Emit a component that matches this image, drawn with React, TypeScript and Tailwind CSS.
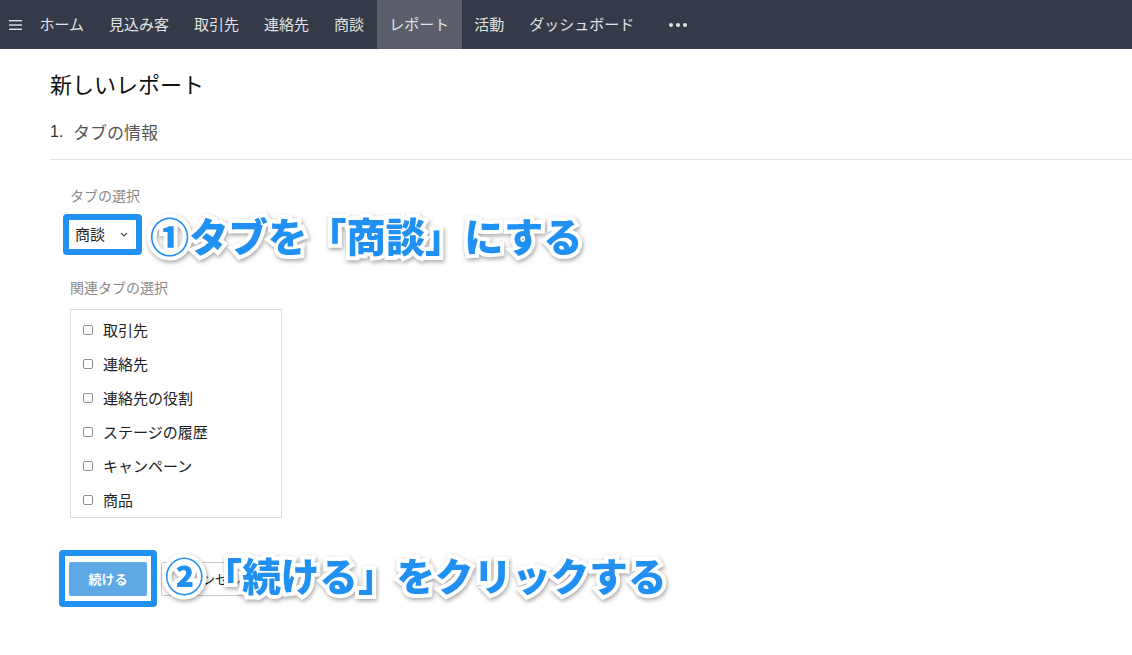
import React from "react";

const navItems = ["ホーム", "見込み客", "取引先", "連絡先", "商談", "レポート", "活動", "ダッシュボード"];
const related = ["取引先", "連絡先", "連絡先の役割", "ステージの履歴", "キャンペーン", "商品"];

const jp = "font-['Noto_Sans_CJK_JP','Noto_Sans',sans-serif]";

function Callout({ children, small }: { children: React.ReactNode; small?: boolean }) {
  return (
    <span
      className={`${jp} whitespace-nowrap ${small ? "text-[38.6px]" : "text-[39.3px]"} font-black leading-none text-[#2190f3] [-webkit-text-stroke:8px_white] [paint-order:stroke_fill] [filter:drop-shadow(1px_2px_2px_rgba(0,0,0,0.35))]`}
    >
      {children}
    </span>
  );
}

export default function App() {
  return (
    <div className={`${jp} min-h-[655px] w-full bg-white`}>
      {/* top nav */}
      <nav className="flex h-[49px] items-stretch bg-[#343a47] text-[15px] text-[#e1e2e5]">
        <div className="flex w-[27px] items-center justify-end pr-[5px]">
          <svg width="13" height="10" viewBox="0 0 13 10">
            <rect x="0" y="0" width="13" height="1.4" fill="#e1e2e5" />
            <rect x="0" y="4.3" width="13" height="1.4" fill="#e1e2e5" />
            <rect x="0" y="8.6" width="13" height="1.4" fill="#e1e2e5" />
          </svg>
        </div>
        {navItems.map((n) => (
          <div
            key={n}
            className={`flex items-center px-[12.5px] ${n === "レポート" ? "bg-[#5a5f6b]" : ""}`}
          >
            {n}
          </div>
        ))}
        <div className="ml-[10px] flex items-center gap-[3px] px-[12px]">
          <span className="h-[4px] w-[4px] rounded-full bg-[#e1e2e5]" />
          <span className="h-[4px] w-[4px] rounded-full bg-[#e1e2e5]" />
          <span className="h-[4px] w-[4px] rounded-full bg-[#e1e2e5]" />
        </div>
      </nav>

      <main className="pl-[50px]">
        <h1 className="mt-[23px] text-[22px] leading-[22px] text-[#111]">新しいレポート</h1>
        <div className="mt-[28px] flex items-center text-[17px] leading-[20px] text-[#555]">
          <span className="w-[23px] font-['Liberation_Sans',sans-serif] text-[16px] text-[#333]">1.</span>
          <span>タブの情報</span>
        </div>
        <div className="mt-[17px] border-t border-[#e4e4e4]" />

        <section className="pl-[20px]">
          <div className="mt-[26px] text-[14px] leading-[18px] text-[#8a8a8a]">タブの選択</div>
          <div className="mt-[10px] -ml-[7px] flex items-center gap-[8px]">
            <div className="flex h-[41px] w-[79px] items-center rounded-[4px] border-[6px] border-[#2190f3] bg-white pl-[6px] pr-[8px]">
              <span className="text-[15px] text-[#222]">商談</span>
              <svg className="ml-auto" width="8" height="5" viewBox="0 0 8 5">
                <path d="M1 1 L4 4 L7 1" stroke="#555" strokeWidth="1.2" fill="none" />
              </svg>
            </div>
            <Callout>①タブを「商談」にする</Callout>
          </div>

          <div className="mt-[23px] text-[14px] leading-[18px] text-[#8a8a8a]">関連タブの選択</div>
          <div className="mt-[13px] w-[212px] border border-[#dcdcdc] pt-[3px]">
            {related.map((r) => (
              <div key={r} className="flex h-[34px] items-center pl-[12px] text-[15px] text-[#222]">
                <span className="h-[10px] w-[10px] rounded-[2px] border border-[#8d8d8d] bg-white" />
                <span className="ml-[10px]">{r}</span>
              </div>
            ))}
          </div>

          <div className="relative mt-[32px] -ml-[11px] flex items-center">
            <div className="flex h-[57px] w-[98px] items-center justify-center rounded-[4px] border-[6px] border-[#2190f3] bg-white">
              <div className="flex h-[34px] w-[78px] items-center justify-center rounded-[2px] bg-[#5ea8e6] text-[13px] font-bold text-white">
                続ける
              </div>
            </div>
            <div className="ml-[4px] flex h-[34px] w-[92px] items-center rounded-[2px] border border-[#c9c9c9] bg-white pl-[14px] text-[13px] text-[#222]">
              キャンセル
            </div>
            <div className="absolute left-[106px] top-[5px]">
              <Callout small>②「続ける」をクリックする</Callout>
            </div>
          </div>
        </section>
      </main>
    </div>
  );
}
